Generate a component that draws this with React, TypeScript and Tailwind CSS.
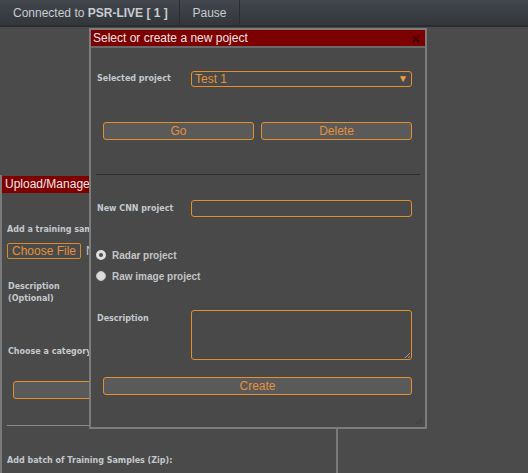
const label = "font-['DejaVu_Sans',sans-serif] text-[8px] leading-[10px] font-bold text-[#c3c8cd]";
const orangeBtn =
  "rounded-[3px] border border-[#e48f2c] bg-[#5a5a5a] font-['Liberation_Sans',Arial,sans-serif] text-[12px] leading-none text-[#e3913a]";

function TopBar() {
  return (
    <div className="flex h-[27px] items-stretch border-b-2 border-[#2a2c30] bg-gradient-to-b from-[#43474e] to-[#33363b] font-['Liberation_Sans',Arial,sans-serif] text-[12px] text-[#c9ccd0]">
      <div className="flex w-[180px] items-center border-r border-[#2b2d31] pl-[13px]">
        Connected to&nbsp;<b>PSR-LIVE [ 1 ]</b>
      </div>
      <div className="flex w-[60px] items-center justify-center border-r border-[#2b2d31]">Pause</div>
    </div>
  );
}

function UploadPanel() {
  return (
    <div className="absolute left-0 top-[175px] h-[310px] w-[338px] border-l-2 border-r-2 border-[#7a7a7a] bg-[#4a4a4a]">
      <div className="mt-px h-[17px] bg-[#7e0000] pl-[3px] font-['Liberation_Sans',Arial,sans-serif] text-[12px] leading-[17px] text-[#f0e6e6]">
        Upload/Manage Training Samples
      </div>
      <div className="px-[5px]">
        <div className={`${label} mt-[32px]`}>Add a training sample:</div>
        <div className="mt-[7px] flex items-center gap-[5px]">
          <button className="h-[16px] w-[74px] rounded-[2px] border border-[#d6892f] font-['Liberation_Sans',Arial,sans-serif] text-[12px] leading-none text-[#e3913a]">
            Choose File
          </button>
          <span className="font-['Liberation_Sans',Arial,sans-serif] text-[12px] text-[#c9c9c9]">No file chosen</span>
        </div>
        <div className={`${label} mt-[21px] pl-px leading-[12px]`}>
          Description
          <br />
          (Optional)
        </div>
        <div className={`${label} mt-[42px] pl-px`}>Choose a category</div>
        <div className={`${orangeBtn} ml-[6px] mt-[24px] h-[18px] w-[310px]`} />
        <div className="mt-[26px] h-px w-[320px] bg-[#8a8a8a]" />
        <div className={`${label} mt-[30px]`}>Add batch of Training Samples (Zip):</div>
      </div>
    </div>
  );
}

function Radio({ checked, text }: { checked: boolean; text: string }) {
  return (
    <div className="flex h-[14px] items-center gap-[6px] pl-[5px]">
      {checked ? (
        <span className="box-border h-[10px] w-[10px] rounded-full border-[3px] border-[#dedede] bg-[#4f4f4f]" />
      ) : (
        <span className="box-border h-[10px] w-[10px] rounded-full border border-[#bdbdbd] bg-[#dcdcdc]" />
      )}
      <span className="font-['Liberation_Sans',Arial,sans-serif] text-[10px] font-bold text-[#c2c4c6]">{text}</span>
    </div>
  );
}

function ProjectDialog() {
  return (
    <div className="absolute left-[89px] top-[28px] h-[401px] w-[338px] border-2 border-[#7c7c7c] bg-[#494949]">
      <div className="flex h-[16px] items-center justify-between bg-[#7c0000] pl-[2px] pr-[5px] font-['Liberation_Sans',Arial,sans-serif] text-[12px] text-[#efe4e4]">
        <span>Select or create a new poject</span>
        <span className="text-[15px] font-bold leading-none text-[#3e0000]">×</span>
      </div>
      <div className="border-t-2 border-[#6a6a6a]" />

      <div className="mt-[23px] flex items-center pl-[6px]">
        <div className={`${label} w-[94px]`}>Selected project</div>
        <div className="flex h-[16px] w-[221px] items-center justify-between rounded-[3px] border border-[#e48f2c] pl-[3px] pr-[3px] font-['Liberation_Sans',Arial,sans-serif] text-[12px] text-[#e3913a]">
          <span>Test 1</span>
          <span className="text-[10px] leading-none text-[#f0a040]">▼</span>
        </div>
      </div>

      <div className="mt-[35px] flex gap-[7px] pl-[12px]">
        <button className={`${orangeBtn} h-[18px] w-[151px]`}>Go</button>
        <button className={`${orangeBtn} h-[18px] w-[151px]`}>Delete</button>
      </div>

      <div className="mx-[5px] mt-[34px] h-px bg-[#2e2e2e]" />

      <div className="mt-[25px] flex items-center pl-[6px]">
        <div className={`${label} w-[94px]`}>New CNN project</div>
        <div className="h-[17px] w-[221px] rounded-[3px] border border-[#e48f2c]" />
      </div>

      <div className="mt-[31px] flex flex-col gap-[7px]">
        <Radio checked text="Radar project" />
        <Radio checked={false} text="Raw image project" />
      </div>

      <div className="mt-[27px] flex items-start pl-[6px]">
        <div className={`${label} mt-[4px] w-[94px]`}>Description</div>
        <div className="relative h-[50px] w-[221px] rounded-[3px] border border-[#e48f2c]">
          <svg className="absolute bottom-[1px] right-[1px]" width="6" height="6" viewBox="0 0 6 6">
            <path d="M1 6 L6 1 M4 6 L6 4" stroke="#9a9a9a" strokeWidth="1" />
          </svg>
        </div>
      </div>

      <div className="mt-[17px] flex pl-[12px]">
        <button className={`${orangeBtn} h-[18px] w-[309px]`}>Create</button>
      </div>

      <svg className="absolute bottom-[3px] right-[3px]" width="8" height="8" viewBox="0 0 8 8">
        <path d="M2 8 L8 2 M5 8 L8 5" stroke="#3c3c3c" strokeWidth="1" />
      </svg>
    </div>
  );
}

export default function App() {
  return (
    <div className="relative h-[473px] w-[528px] overflow-hidden bg-[#4b4b4b]">
      <TopBar />
      <UploadPanel />
      <ProjectDialog />
    </div>
  );
}
